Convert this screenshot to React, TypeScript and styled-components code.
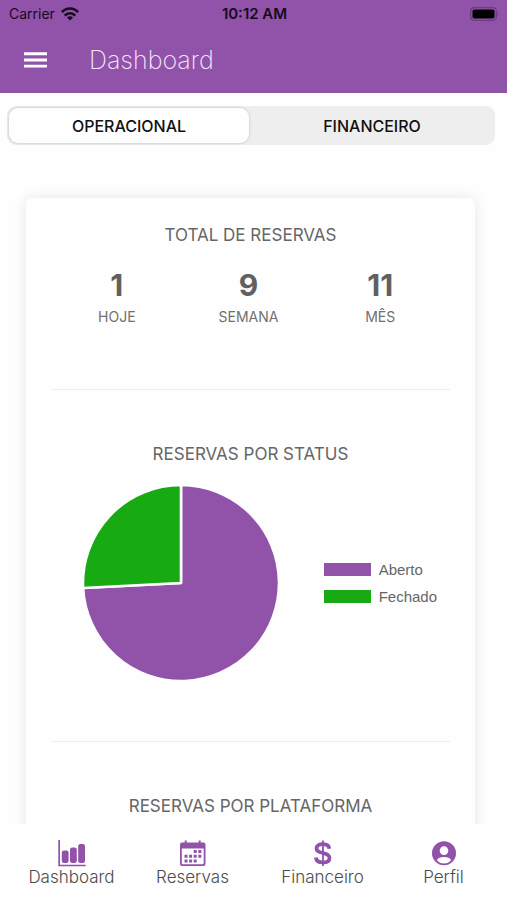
import React, { useState } from "react";
import styled, { createGlobalStyle } from "styled-components";

const purple = "#9152aa";
const green = "#18aa12";

const GlobalStyle = createGlobalStyle`
  * { box-sizing: border-box; }
  body {
    margin: 0;
    background: #fefefe;
    font-family: Inter, "Liberation Sans", sans-serif;
  }
  button { font: inherit; border: 0; padding: 0; background: none; cursor: pointer; }
`;

const Screen = styled.div`
  display: flex;
  flex-direction: column;
  height: 100vh;
  overflow: hidden;
`;

const Header = styled.header`
  flex: none;
  background: ${purple};
`;

const StatusBar = styled.div`
  display: grid;
  grid-template-columns: 1fr auto 1fr;
  align-items: center;
  height: 27px;
  padding: 0 7px 0 9px;
  font-size: 14px;
  color: #160a1c;
`;

const Carrier = styled.span`
  display: flex;
  align-items: center;
  gap: 6px;
`;

const Clock = styled.time`
  font-size: 15px;
  font-weight: 600;
`;

const BatteryIcon = styled.svg`
  justify-self: end;
`;

const TitleBar = styled.div`
  display: flex;
  align-items: center;
  gap: 42px;
  height: 66px;
  padding: 0 24px;
`;

const MenuButton = styled.button`
  display: flex;
`;

const PageTitle = styled.h1`
  margin: 0;
  font-size: 25px;
  font-weight: 200;
  color: #f6e6fb;
`;

const Content = styled.main`
  flex: 1;
  min-height: 0;
  overflow: hidden;
  padding: 13px 12px 0 7px;
`;

const Segments = styled.div`
  display: grid;
  grid-template-columns: 240fr 246fr;
  height: 39px;
  padding: 2px 0 2px 2px;
  border-radius: 9px;
  background: #eeeeee;
`;

const Segment = styled.button<{ $active: boolean }>`
  border-radius: 9px;
  font-size: 16px;
  font-weight: 500;
  color: #111;
  background: ${(p) => (p.$active ? "#fefefe" : "transparent")};
  box-shadow: ${(p) => (p.$active ? "0 0 3px rgba(0, 0, 0, 0.22)" : "none")};
`;

const Card = styled.div`
  margin: 53px 20px 0 19px;
  padding: 0 25px;
  border-radius: 6px;
  background: #fefefe;
  box-shadow: 0 0 14px rgba(0, 0, 0, 0.1);
`;

const Section = styled.section`
  height: 352px;
  padding-top: 52px;
  border-top: 1px solid #eeeeee;
`;

const SummarySection = styled(Section)`
  height: 191px;
  padding-top: 25px;
  border-top: 0;
`;

const SectionTitle = styled.h2`
  margin: 0;
  font-size: 17px;
  line-height: 24px;
  font-weight: 400;
  text-align: center;
  color: #666;
`;

const Totals = styled.dl`
  display: grid;
  grid-template-columns: repeat(3, 1fr);
  margin: 20px 0 0;
  padding-right: 4px;
`;

const Total = styled.div`
  display: flex;
  flex-direction: column-reverse;
  text-align: center;
`;

const TotalLabel = styled.dt`
  font-size: 14px;
  line-height: 28px;
  color: #707070;
`;

const TotalValue = styled.dd`
  margin: 0;
  font-size: 30px;
  line-height: 36px;
  font-weight: 700;
  color: #606060;
`;

const ChartRow = styled.div`
  display: flex;
  align-items: center;
  justify-content: space-between;
  padding: 19px 13px 0 32px;
`;

const Legend = styled.ul`
  display: grid;
  gap: 9px;
  margin: 0;
  padding: 0;
  list-style: none;
`;

const LegendItem = styled.li`
  display: flex;
  align-items: center;
  gap: 8px;
  font-family: "Liberation Sans", Arial, sans-serif;
  font-size: 15px;
  line-height: 18px;
  color: #666;
`;

const Swatch = styled.span<{ $color: string }>`
  width: 47px;
  height: 13px;
  background: ${(p) => p.$color};
`;

const TabBar = styled.nav`
  flex: none;
  display: grid;
  grid-template-columns: 121fr 121fr 139fr 103fr;
  height: 76px;
  padding: 15px 12px 0 11px;
  background: #fefefe;
`;

const Tab = styled.a`
  display: flex;
  flex-direction: column;
  align-items: center;
  font-size: 17px;
  line-height: 20px;
  font-weight: 300;
  color: #4c4c4c;
  text-decoration: none;
`;

const TabIcon = styled.svg`
  display: block;
  fill: ${purple};
`;

const slices = [
  { label: "Aberto", value: 23, color: purple },
  { label: "Fechado", value: 8, color: green },
];

const totals = [
  { label: "HOJE", value: 1 },
  { label: "SEMANA", value: 9 },
  { label: "MÊS", value: 11 },
];

function Pie() {
  const sum = slices.reduce((s, x) => s + x.value, 0);
  const at = (v: number) => {
    const a = (v / sum) * Math.PI * 2 - Math.PI / 2;
    return `${98 + 98 * Math.cos(a)} ${98 + 98 * Math.sin(a)}`;
  };
  let start = 0;
  return (
    <svg width="196" height="196" viewBox="0 0 196 196" role="img" aria-label="Reservas por status">
      {slices.map((s) => {
        const from = start;
        start += s.value;
        return (
          <path
            key={s.label}
            d={`M98 98L${at(from)}A98 98 0 ${s.value / sum > 0.5 ? 1 : 0} 1 ${at(start)}Z`}
            fill={s.color}
            stroke="#fefefe"
            strokeWidth="2.6"
            strokeLinejoin="round"
          />
        );
      })}
    </svg>
  );
}

const tabs = [
  {
    label: "Dashboard",
    icon: (
      <>
        <path d="M.3 1H2v24.700H27.700V27.300H.3z" />
        <rect x="3.800" y="11.500" width="6.800" height="12.500" rx="2.200" />
        <rect x="12" y="8.500" width="6.800" height="15.500" rx="2.200" />
        <rect x="20.200" y="5" width="6.800" height="19" rx="2.200" />
      </>
    ),
  },
  {
    label: "Reservas",
    icon: (
      <>
        <path
          fillRule="evenodd"
          d="M3 3.500H5.700V1.500H7.700V3.500H19.700V1.500H21.700V3.500H24.500Q26.500 3.500 26.500 5.500V25Q26.500 27 24.500 27H3Q1 27 1 25V5.500Q1 3.500 3 3.500ZM2.800 9.500V24Q2.800 25.200 4 25.200H23.500Q24.700 25.200 24.700 24V9.500Z"
        />
        <path d="M14.700 11h3v3h-3zM19.300 11h3v3h-3zM5.500 15.700h3v3h-3zM10.100 15.700h3v3h-3zM14.700 15.700h3v3h-3zM19.300 15.700h3v3h-3zM5.500 20.400h3v3h-3zM10.100 20.400h3v3h-3zM14.700 20.400h3v3h-3z" />
      </>
    ),
  },
  {
    label: "Financeiro",
    icon: (
      <g fill="none" stroke={purple}>
        <path
          strokeWidth="3.700"
          d="M20.300 9.700C20 6.700 17.700 5.200 13.900 5.200C10 5.200 7.500 6.800 7.500 9.500C7.500 12.400 10 13.200 13.900 14C17.900 14.900 20.500 15.900 20.500 19C20.500 22 17.900 23.500 14 23.500C9.800 23.500 7.200 21.700 6.900 18.500"
        />
        <path strokeWidth="1.800" d="M14 1.500V27" />
      </g>
    ),
  },
  {
    label: "Perfil",
    icon: (
      <path
        fillRule="evenodd"
        d="M14 2.300A12 12 0 1 1 14 26.300A12 12 0 1 1 14 2.300ZM14 7.300A4.300 4.300 0 1 0 14 15.900A4.300 4.300 0 1 0 14 7.300ZM6.800 21Q9.500 24.600 14 24.600T21.200 21Q19.500 17.900 14 17.900T6.800 21Z"
      />
    ),
  },
];

export default function App() {
  const [active, setActive] = useState("OPERACIONAL");
  return (
    <Screen>
      <GlobalStyle />
      <Header>
        <StatusBar>
          <Carrier>
            Carrier
            <svg width="18" height="14" viewBox="0 0 18 14" fill="none" stroke="currentColor" strokeWidth="2.600">
              <path d="M.9 5.200Q4.400 1.500 9 1.500T17.100 5.200M3.700 8.600Q6 6.200 9 6.200T14.300 8.600" />
              <path d="M9 13.500L6 10.500Q9 8 12 10.500Z" fill="currentColor" stroke="none" />
            </svg>
          </Carrier>
          <Clock>10:12 AM</Clock>
          <BatteryIcon width="30" height="14" viewBox="0 0 30 14">
            <rect x=".7" y=".7" width="25.600" height="12.600" rx="3.500" fill="none" stroke="#6c3b80" strokeWidth="1.200" />
            <rect x="2.500" y="2.500" width="22" height="9" rx="1.800" />
            <path d="M27.700 5Q29.500 7 27.700 9Z" fill="#6c3b80" />
          </BatteryIcon>
        </StatusBar>
        <TitleBar>
          <MenuButton aria-label="Menu">
            <svg width="23" height="16" viewBox="0 0 23 16" fill="#fff">
              <path d="M0 .3h23v2.900H0zM0 6.500h23v2.900H0zM0 12.700h23v2.900H0z" />
            </svg>
          </MenuButton>
          <PageTitle>Dashboard</PageTitle>
        </TitleBar>
      </Header>
      <Content>
        <Segments>
          {["OPERACIONAL", "FINANCEIRO"].map((s) => (
            <Segment key={s} $active={s === active} aria-pressed={s === active} onClick={() => setActive(s)}>
              {s}
            </Segment>
          ))}
        </Segments>
        <Card>
          <SummarySection>
            <SectionTitle>TOTAL DE RESERVAS</SectionTitle>
            <Totals>
              {totals.map((t) => (
                <Total key={t.label}>
                  <TotalLabel>{t.label}</TotalLabel>
                  <TotalValue>{t.value}</TotalValue>
                </Total>
              ))}
            </Totals>
          </SummarySection>
          <Section>
            <SectionTitle>RESERVAS POR STATUS</SectionTitle>
            <ChartRow>
              <Pie />
              <Legend>
                {slices.map((s) => (
                  <LegendItem key={s.label}>
                    <Swatch $color={s.color} />
                    {s.label}
                  </LegendItem>
                ))}
              </Legend>
            </ChartRow>
          </Section>
          <Section>
            <SectionTitle>RESERVAS POR PLATAFORMA</SectionTitle>
          </Section>
        </Card>
      </Content>
      <TabBar>
        {tabs.map((t) => (
          <Tab key={t.label} href={`#${t.label.toLowerCase()}`}>
            <TabIcon width="28" height="28" viewBox="0 0 28 28">
              {t.icon}
            </TabIcon>
            {t.label}
          </Tab>
        ))}
      </TabBar>
    </Screen>
  );
}
